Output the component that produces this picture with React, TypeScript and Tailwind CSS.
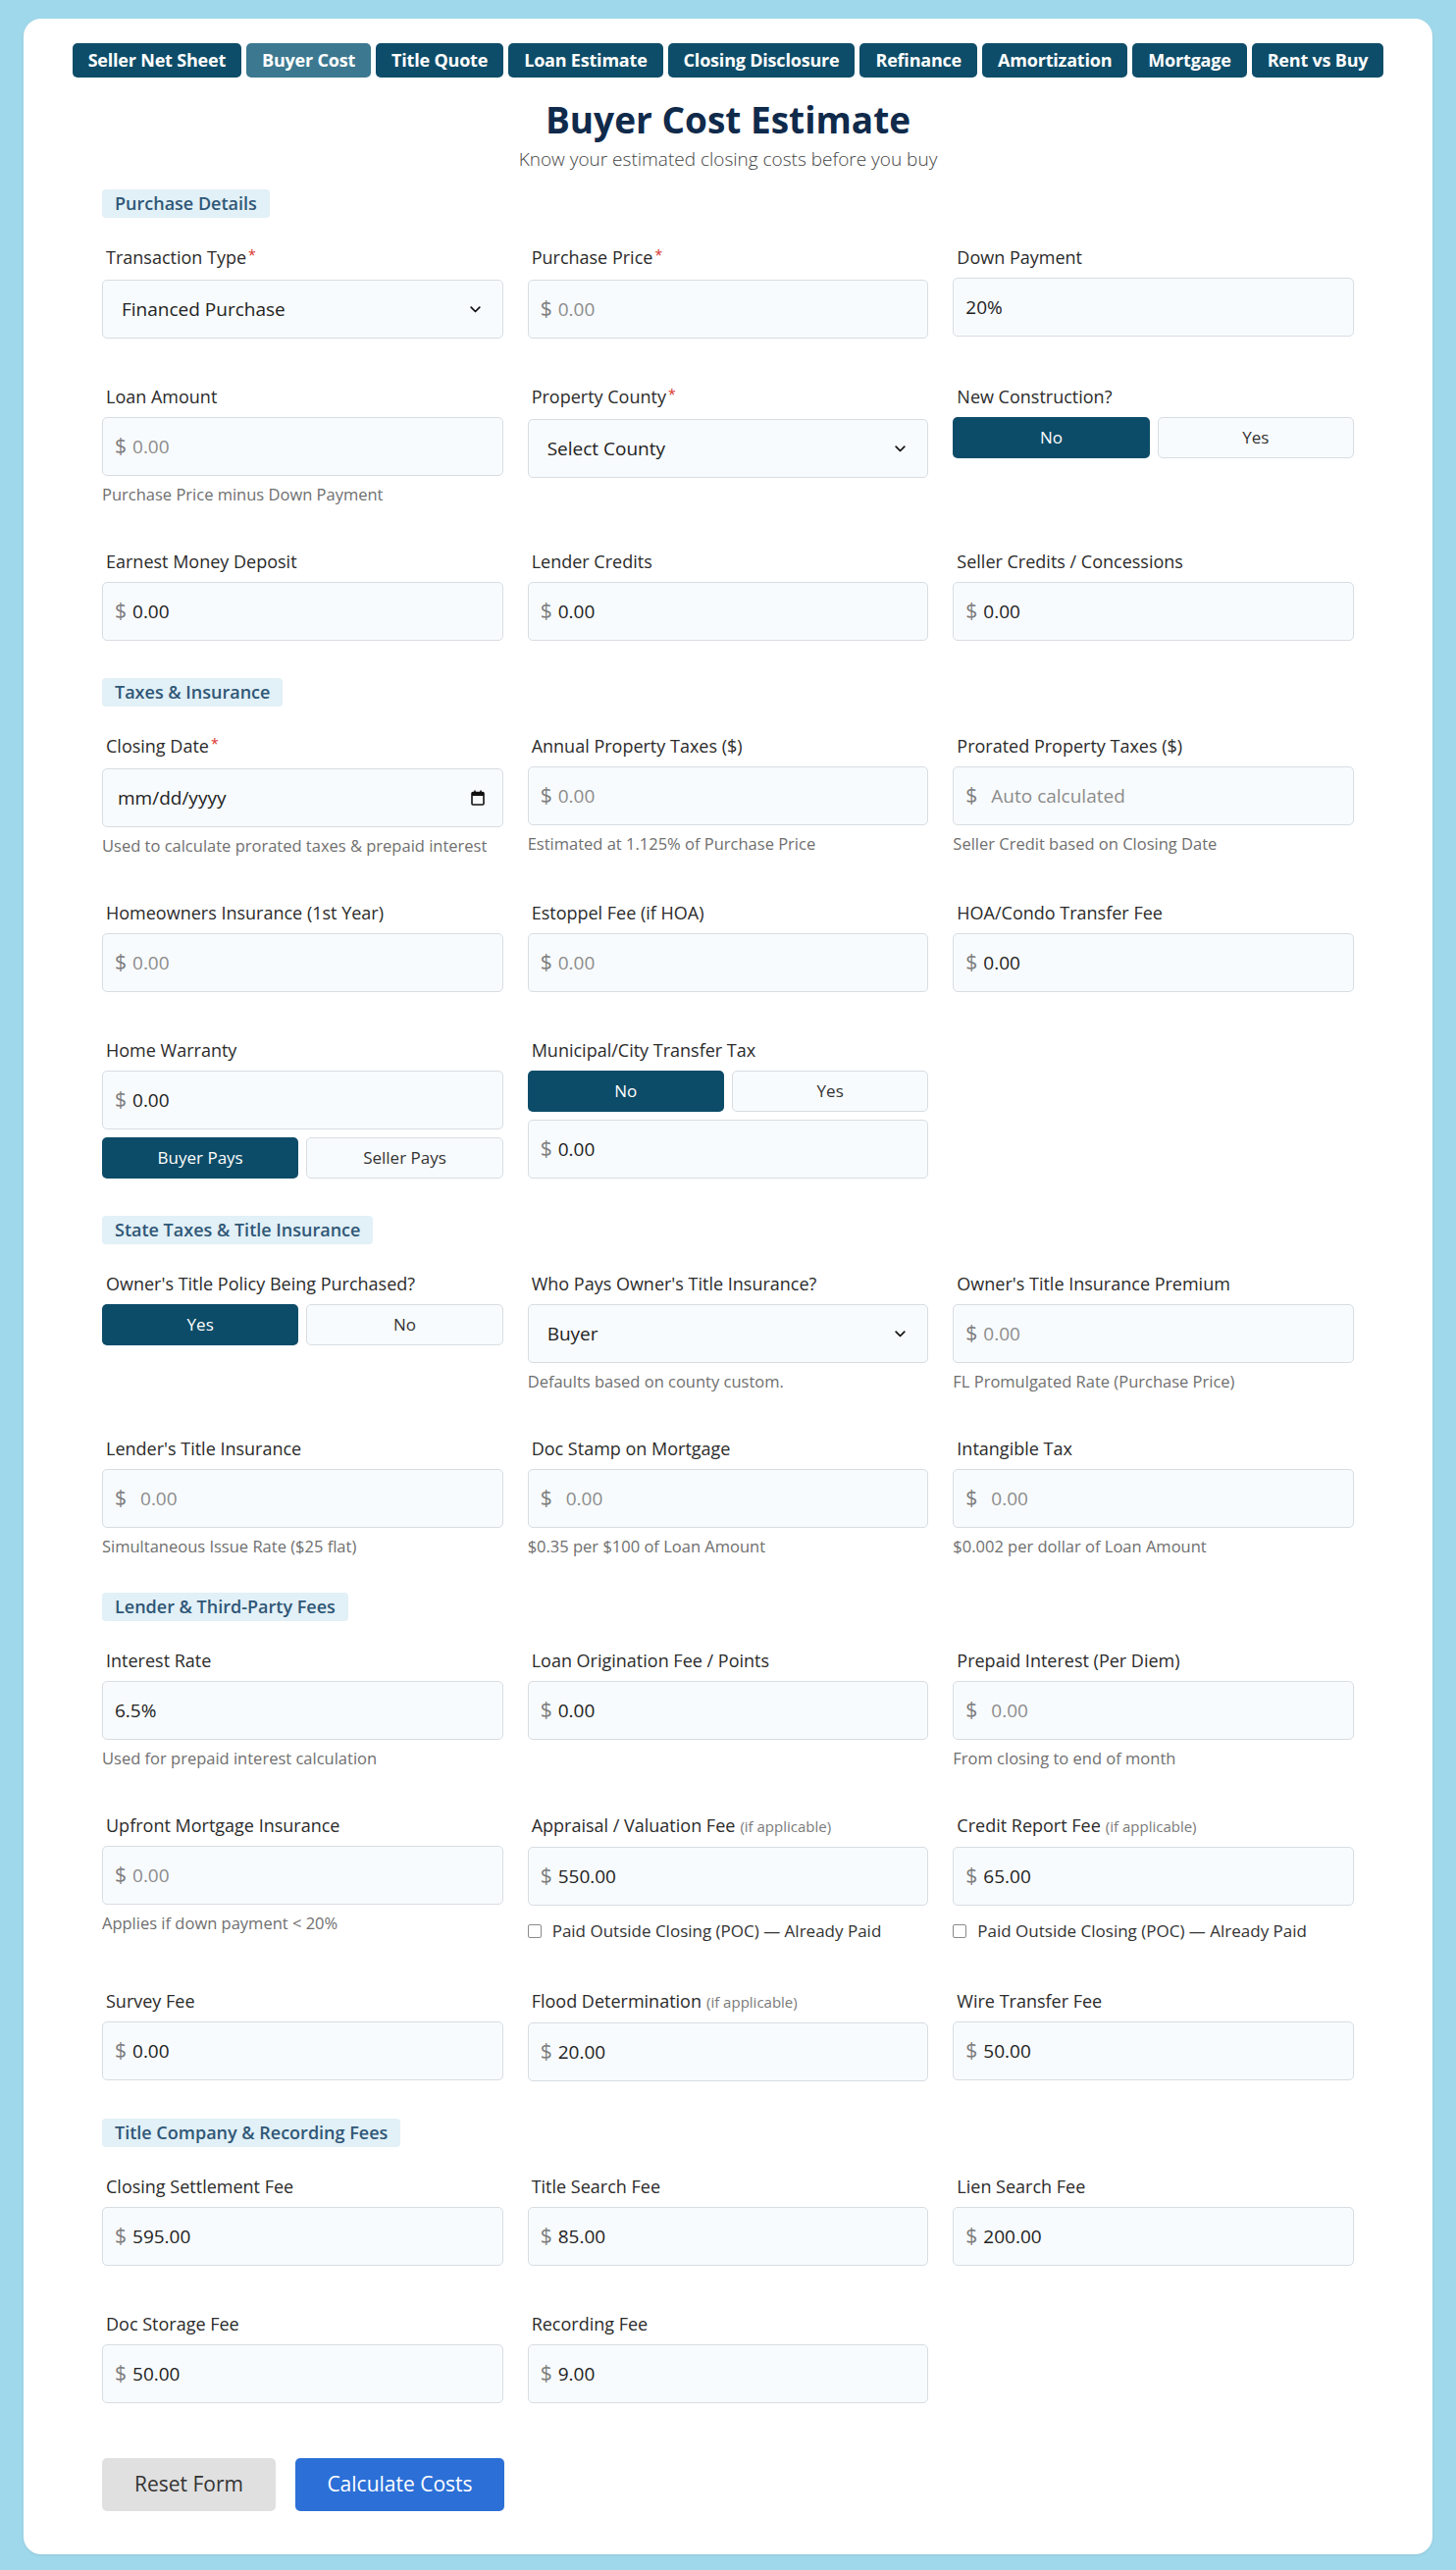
import type { ReactNode } from "react";

type Money = {
  kind: "money";
  label: string;
  required?: boolean;
  note?: string;
  value?: string;
  placeholder?: string;
  wide?: boolean;
  helper?: string;
  poc?: boolean;
};
type Plain = { kind: "text"; label: string; value: string; helper?: string };
type Select = { kind: "select"; label: string; required?: boolean; value: string; helper?: string };
type DateField = { kind: "date"; label: string; required?: boolean; helper?: string };
type Toggle = { kind: "toggle"; label: string; options: [string, string] };
type Warranty = { kind: "warranty"; label: string; value: string };
type Transfer = { kind: "transfer"; label: string; value: string };
type Blank = { kind: "blank" };

type Field = Money | Plain | Select | DateField | Toggle | Warranty | Transfer | Blank;

const tabs = [
  "Seller Net Sheet",
  "Buyer Cost",
  "Title Quote",
  "Loan Estimate",
  "Closing Disclosure",
  "Refinance",
  "Amortization",
  "Mortgage",
  "Rent vs Buy",
];

const sections: { title: string; fields: Field[] }[] = [
  {
    title: "Purchase Details",
    fields: [
      { kind: "select", label: "Transaction Type", required: true, value: "Financed Purchase" },
      { kind: "money", label: "Purchase Price", required: true, placeholder: "0.00" },
      { kind: "text", label: "Down Payment", value: "20%" },
      { kind: "money", label: "Loan Amount", placeholder: "0.00", helper: "Purchase Price minus Down Payment" },
      { kind: "select", label: "Property County", required: true, value: "Select County" },
      { kind: "toggle", label: "New Construction?", options: ["No", "Yes"] },
      { kind: "money", label: "Earnest Money Deposit", value: "0.00" },
      { kind: "money", label: "Lender Credits", value: "0.00" },
      { kind: "money", label: "Seller Credits / Concessions", value: "0.00" },
    ],
  },
  {
    title: "Taxes & Insurance",
    fields: [
      { kind: "date", label: "Closing Date", required: true, helper: "Used to calculate prorated taxes & prepaid interest" },
      { kind: "money", label: "Annual Property Taxes ($)", placeholder: "0.00", helper: "Estimated at 1.125% of Purchase Price" },
      { kind: "money", label: "Prorated Property Taxes ($)", placeholder: "Auto calculated", wide: true, helper: "Seller Credit based on Closing Date" },
      { kind: "money", label: "Homeowners Insurance (1st Year)", placeholder: "0.00" },
      { kind: "money", label: "Estoppel Fee (if HOA)", placeholder: "0.00" },
      { kind: "money", label: "HOA/Condo Transfer Fee", value: "0.00" },
      { kind: "warranty", label: "Home Warranty", value: "0.00" },
      { kind: "transfer", label: "Municipal/City Transfer Tax", value: "0.00" },
      { kind: "blank" },
    ],
  },
  {
    title: "State Taxes & Title Insurance",
    fields: [
      { kind: "toggle", label: "Owner's Title Policy Being Purchased?", options: ["Yes", "No"] },
      { kind: "select", label: "Who Pays Owner's Title Insurance?", value: "Buyer", helper: "Defaults based on county custom." },
      { kind: "money", label: "Owner's Title Insurance Premium", placeholder: "0.00", helper: "FL Promulgated Rate (Purchase Price)" },
      { kind: "money", label: "Lender's Title Insurance", placeholder: "0.00", wide: true, helper: "Simultaneous Issue Rate ($25 flat)" },
      { kind: "money", label: "Doc Stamp on Mortgage", placeholder: "0.00", wide: true, helper: "$0.35 per $100 of Loan Amount" },
      { kind: "money", label: "Intangible Tax", placeholder: "0.00", wide: true, helper: "$0.002 per dollar of Loan Amount" },
    ],
  },
  {
    title: "Lender & Third-Party Fees",
    fields: [
      { kind: "text", label: "Interest Rate", value: "6.5%", helper: "Used for prepaid interest calculation" },
      { kind: "money", label: "Loan Origination Fee / Points", value: "0.00" },
      { kind: "money", label: "Prepaid Interest (Per Diem)", placeholder: "0.00", wide: true, helper: "From closing to end of month" },
      { kind: "money", label: "Upfront Mortgage Insurance", placeholder: "0.00", helper: "Applies if down payment < 20%" },
      { kind: "money", label: "Appraisal / Valuation Fee", note: "(if applicable)", value: "550.00", poc: true },
      { kind: "money", label: "Credit Report Fee", note: "(if applicable)", value: "65.00", poc: true },
      { kind: "money", label: "Survey Fee", value: "0.00" },
      { kind: "money", label: "Flood Determination", note: "(if applicable)", value: "20.00" },
      { kind: "money", label: "Wire Transfer Fee", value: "50.00" },
    ],
  },
  {
    title: "Title Company & Recording Fees",
    fields: [
      { kind: "money", label: "Closing Settlement Fee", value: "595.00" },
      { kind: "money", label: "Title Search Fee", value: "85.00" },
      { kind: "money", label: "Lien Search Fee", value: "200.00" },
      { kind: "money", label: "Doc Storage Fee", value: "50.00" },
      { kind: "money", label: "Recording Fee", value: "9.00" },
    ],
  },
];

function Label({ text, required, note }: { text: string; required?: boolean; note?: string }) {
  return (
    <div className="mb-[9px] pl-[4px] text-[18px] leading-[24px] text-[#2b2b2b]">
      {text}
      {required && <span className="relative -top-[4px] ml-[2px] text-[14px] text-[#d9342b]">*</span>}
      {note && <span className="ml-[5px] text-[15px] text-[#7a7a7a]">{note}</span>}
    </div>
  );
}

function Helper({ text }: { text: string }) {
  return <div className="mt-[9px] text-[16.5px] leading-[19px] text-[#6f6f6f]">{text}</div>;
}

function Box({ children, className = "" }: { children: ReactNode; className?: string }) {
  return (
    <div
      className={`flex h-[60px] items-center rounded-[5px] border border-[#d8dde2] bg-[#f8fbfd] text-[19px] ${className}`}
    >
      {children}
    </div>
  );
}

function MoneyBox({ value, placeholder, wide }: { value?: string; placeholder?: string; wide?: boolean }) {
  return (
    <Box className="px-[12px]">
      <span className="text-[21px] text-[#7d7d7d]">$</span>
      {value ? (
        <span className="ml-[6px] text-[#222]">{value}</span>
      ) : (
        <span className={`${wide ? "ml-[14px]" : "ml-[6px]"} text-[#8c8c8c]`}>{placeholder}</span>
      )}
    </Box>
  );
}

function ToggleGroup({ options }: { options: [string, string] }) {
  return (
    <div className="grid h-[42px] grid-cols-2 gap-[8px] text-[17px]">
      <div className="flex items-center justify-center rounded-[5px] bg-[#0d4c68] font-medium text-white">
        {options[0]}
      </div>
      <div className="flex items-center justify-center rounded-[5px] border border-[#d8dde2] bg-[#f8fbfd] text-[#333]">
        {options[1]}
      </div>
    </div>
  );
}

function Chevron() {
  return (
    <svg width="11" height="7" viewBox="0 0 11 7" fill="none">
      <path d="M1.2 1.2 5.5 5.5l4.3-4.3" stroke="#111" strokeWidth="1.7" strokeLinecap="round" strokeLinejoin="round" />
    </svg>
  );
}

function CalendarIcon() {
  return (
    <svg width="14" height="16" viewBox="0 0 14 16" fill="none">
      <rect x="1" y="2.5" width="12" height="12.5" rx="1" stroke="#111" strokeWidth="1.6" />
      <rect x="1" y="2.5" width="12" height="3.5" fill="#111" />
      <path d="M4 0.5v3M10 0.5v3" stroke="#111" strokeWidth="1.6" />
    </svg>
  );
}

function Checkbox() {
  return <span className="h-[14px] w-[14px] shrink-0 rounded-[2px] border border-[#8a8a8a] bg-white" />;
}

function FieldView({ field }: { field: Field }) {
  if (field.kind === "blank") return <div />;

  const required = "required" in field ? field.required : false;
  const note = "note" in field ? field.note : undefined;

  return (
    <div>
      <Label text={field.label} required={required} note={note} />

      {field.kind === "money" && (
        <>
          <MoneyBox value={field.value} placeholder={field.placeholder} wide={field.wide} />
          {field.helper && <Helper text={field.helper} />}
          {field.poc && (
            <div className="mt-[13px] flex items-center gap-[11px] text-[17px] leading-[25px] text-[#333]">
              <Checkbox />
              Paid Outside Closing (POC) — Already Paid
            </div>
          )}
        </>
      )}

      {field.kind === "text" && (
        <>
          <Box className="px-[12px] text-[#222]">{field.value}</Box>
          {field.helper && <Helper text={field.helper} />}
        </>
      )}

      {field.kind === "select" && (
        <>
          <Box className="justify-between pl-[19px] pr-[22px] text-[#222]">
            <span>{field.value}</span>
            <Chevron />
          </Box>
          {field.helper && <Helper text={field.helper} />}
        </>
      )}

      {field.kind === "date" && (
        <>
          <Box className="justify-between pl-[15px] pr-[18px] text-[#222]">
            <span>mm/dd/yyyy</span>
            <CalendarIcon />
          </Box>
          {field.helper && <Helper text={field.helper} />}
        </>
      )}

      {field.kind === "toggle" && <ToggleGroup options={field.options} />}

      {field.kind === "warranty" && (
        <div className="flex flex-col gap-[8px]">
          <MoneyBox value={field.value} />
          <ToggleGroup options={["Buyer Pays", "Seller Pays"]} />
        </div>
      )}

      {field.kind === "transfer" && (
        <div className="flex flex-col gap-[8px]">
          <ToggleGroup options={["No", "Yes"]} />
          <MoneyBox value={field.value} />
        </div>
      )}
    </div>
  );
}

export default function App() {
  return (
    <div className="min-h-[2619px] bg-[#a0d8eb] px-[24px] pb-[17px] pt-[19px] font-['Open_Sans','Noto_Sans',sans-serif]">
      <div className="rounded-[18px] bg-white px-[80px] pb-[44px] pt-[25px] shadow-[0_1px_3px_rgba(0,0,0,0.08)]">
        {/* Calculator tabs */}
        <nav className="-mx-[40px] flex justify-center gap-[5px]">
          {tabs.map((t) => (
            <div
              key={t}
              className={`flex h-[35px] items-center rounded-[5px] px-[16px] text-[18px] font-bold tracking-[-0.2px] text-white ${
                t === "Buyer Cost" ? "bg-[#3c7890]" : "bg-[#0e4d69]"
              }`}
            >
              {t}
            </div>
          ))}
        </nav>

        <h1 className="mt-[21px] text-center text-[37px] font-bold leading-[44px] text-[#102a4b]">
          Buyer Cost Estimate
        </h1>
        <p className="mt-[6px] text-center text-[19px] font-light leading-[24px] text-[#444]">
          Know your estimated closing costs before you buy
        </p>

        <div className="mt-[19px] flex flex-col gap-[38px]">
          {sections.map((s) => (
            <section key={s.title}>
              <div className="mb-[28px] inline-flex h-[29px] items-center rounded-[4px] bg-[#e2f0f7] px-[13px] text-[18px] font-semibold text-[#2f5776]">
                {s.title}
              </div>
              <div className="grid grid-cols-3 items-start gap-x-[25px] gap-y-[47px]">
                {s.fields.map((f, i) => (
                  <FieldView key={i} field={f} />
                ))}
              </div>
            </section>
          ))}
        </div>

        <div className="mt-[56px] flex gap-[20px] text-[21px]">
          <button className="h-[54px] w-[177px] rounded-[5px] bg-[#e0e0e0] text-[#333]">Reset Form</button>
          <button className="h-[54px] w-[213px] rounded-[5px] bg-[#2b6fd7] text-white">Calculate Costs</button>
        </div>
      </div>
    </div>
  );
}
